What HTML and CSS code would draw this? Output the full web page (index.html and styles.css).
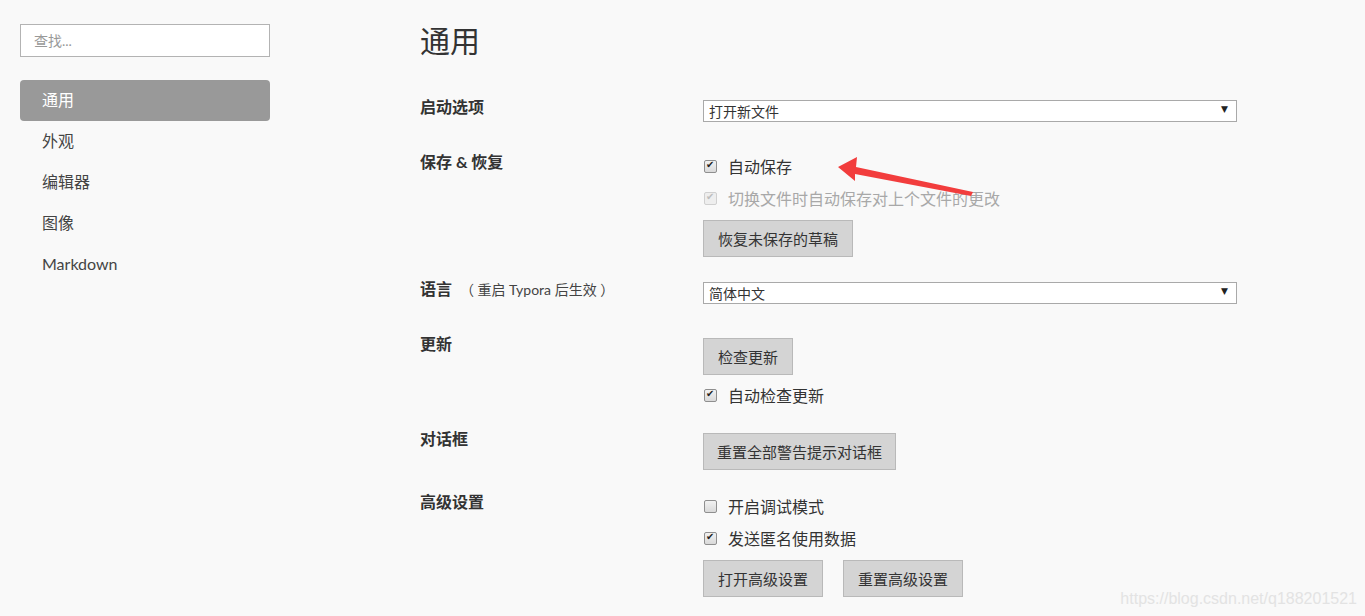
FILE: index.html
```html
<!DOCTYPE html>
<html lang="zh-CN">
<head>
  <meta charset="UTF-8" />
  <title>偏好设置</title>
  <link rel="stylesheet" href="styles.css">
</head>
<body>
  <div class="app">
    <aside class="sidebar">
      <input type="text" class="search" placeholder="查找..." />
      <nav class="nav">
        <a class="nav-item active">通用</a>
        <a class="nav-item">外观</a>
        <a class="nav-item">编辑器</a>
        <a class="nav-item">图像</a>
        <a class="nav-item">Markdown</a>
      </nav>
    </aside>

    <main class="content">
      <h1 class="page-title">通用</h1>

      <div class="rows">
        <section class="row">
          <div class="row-label">启动选项</div>
          <div class="row-controls">
            <div class="select-wrap">
              <select>
                <option>打开新文件</option>
                <option>重新打开上次使用的文件和目录</option>
              </select>
            </div>
          </div>
        </section>

        <section class="row">
          <div class="row-label">保存 &amp; 恢复</div>
          <div class="row-controls">
            <label class="check"><input type="checkbox" checked /> 自动保存</label>
            <label class="check disabled"><input type="checkbox" checked disabled /> 切换文件时自动保存对上个文件的更改</label>
            <button class="btn">恢复未保存的草稿</button>
          </div>
        </section>

        <section class="row">
          <div class="row-label">语言 <span class="note">（ 重启 Typora 后生效 ）</span></div>
          <div class="row-controls">
            <div class="select-wrap">
              <select>
                <option>简体中文</option>
                <option>English</option>
              </select>
            </div>
          </div>
        </section>

        <section class="row">
          <div class="row-label">更新</div>
          <div class="row-controls">
            <button class="btn">检查更新</button>
            <label class="check"><input type="checkbox" checked /> 自动检查更新</label>
          </div>
        </section>

        <section class="row">
          <div class="row-label">对话框</div>
          <div class="row-controls">
            <button class="btn btn-wide">重置全部警告提示对话框</button>
          </div>
        </section>

        <section class="row">
          <div class="row-label">高级设置</div>
          <div class="row-controls">
            <label class="check"><input type="checkbox" /> 开启调试模式</label>
            <label class="check"><input type="checkbox" checked /> 发送匿名使用数据</label>
            <div class="btn-group">
              <button class="btn">打开高级设置</button>
              <button class="btn">重置高级设置</button>
            </div>
          </div>
        </section>
      </div>
    </main>
  </div>

  <!-- red annotation arrow drawn over the screenshot -->
  <svg class="annotation" viewBox="0 0 1365 616" width="1365" height="616">
    <polygon points="838,167 857,157 856,167 973,192 971,196 855,174 855,181" fill="#f23d3d" />
  </svg>

  <div class="watermark">https://blog.csdn.net/q188201521</div>
</body>
</html>
```

FILE: styles.css
```css
body {
  margin: 0;
  background-color: #f9f9f9;
  font-family: "Lato", "Noto Sans CJK SC", sans-serif;
  color: #333;
  overflow: hidden;
}
.app {
  display: flex;
  align-items: flex-start;
}

/* sidebar */
.sidebar {
  flex-shrink: 0;
  width: 250px;
  padding: 24px 20px;
}
.search {
  display: block;
  box-sizing: border-box;
  width: 250px;
  height: 33px;
  padding: 0 13px;
  border: 1px solid #b3b3b3;
  background: #fff;
  font-family: inherit;
  font-size: 14px;
  outline: none;
}
.search::placeholder {
  color: #999;
}
.nav {
  margin-top: 23px;
}
.nav-item {
  display: block;
  height: 41px;
  line-height: 40px;
  padding-left: 22px;
  border-radius: 4px;
  font-size: 16px;
  color: #444;
}
.nav-item.active {
  background-color: #999;
  color: #fff;
}

/* content */
.content {
  padding: 20px 0 0 130px;
}
.page-title {
  margin: 0;
  font-size: 30px;
  line-height: 40px;
  font-weight: normal;
  color: #333;
}
.rows {
  display: flex;
  flex-direction: column;
  gap: 20px;
  margin-top: 35px;
}
.row {
  display: grid;
  grid-template-columns: 283px 534px;
  align-items: start;
}
.row-label {
  font-size: 16px;
  line-height: 24px;
  font-weight: bold;
  color: #333;
}
.row-label .note {
  margin-left: 4px;
  font-size: 14px;
  font-weight: normal;
  color: #444;
}
.row-controls {
  display: flex;
  flex-direction: column;
  align-items: flex-start;
  gap: 8px;
  padding-top: 4px;
}

/* select */
.select-wrap {
  position: relative;
  align-self: stretch;
  margin: 1px 0 8px;
}
.select-wrap select {
  display: block;
  box-sizing: border-box;
  width: 100%;
  height: 22px;
  padding: 0 5px;
  border: 1px solid #a9a9a9;
  border-radius: 0;
  background: #fff;
  font-family: inherit;
  font-size: 14px;
  color: #333;
  -webkit-appearance: none;
  appearance: none;
}
.select-wrap::after {
  content: "▼";
  position: absolute;
  right: 9px;
  top: 4px;
  font-family: "DejaVu Sans", sans-serif;
  font-size: 9px;
  color: #222;
  pointer-events: none;
}

/* checkboxes */
.check {
  display: flex;
  align-items: center;
  gap: 11px;
  height: 24px;
  font-size: 16px;
  color: #333;
}
.check input {
  -webkit-appearance: none;
  appearance: none;
  position: relative;
  box-sizing: border-box;
  width: 13px;
  height: 13px;
  margin: 0 0 0 1px;
  border: 1px solid #8f8f8f;
  border-radius: 2px;
  background: linear-gradient(#f2f2f2, #d9d9d9);
}
.check input:checked::after {
  content: "✔";
  position: absolute;
  left: 1px;
  top: -2px;
  font-family: "DejaVu Sans", sans-serif;
  font-size: 10px;
  color: #222;
}
.check.disabled {
  color: #a8a8a8;
}
.check.disabled input {
  border-color: #d0d0d0;
  background: #eee;
}
.check.disabled input:checked::after {
  color: #bdbdbd;
}

/* buttons */
.btn {
  box-sizing: border-box;
  height: 37px;
  margin-top: 2px;
  padding: 0 14px;
  border: 1px solid #b9b9b9;
  border-radius: 0;
  background-color: #d4d4d4;
  font-family: inherit;
  font-size: 15px;
  color: #333;
}
.btn-wide {
  padding: 0 13px;
}
.btn-group {
  display: flex;
  gap: 20px;
}

.annotation {
  position: absolute;
  left: 0;
  top: 0;
  pointer-events: none;
}
.watermark {
  position: absolute;
  right: 8px;
  bottom: 8px;
  font-family: "Liberation Sans", Arial, sans-serif;
  font-size: 16px;
  color: #e3e3e3;
}
```
